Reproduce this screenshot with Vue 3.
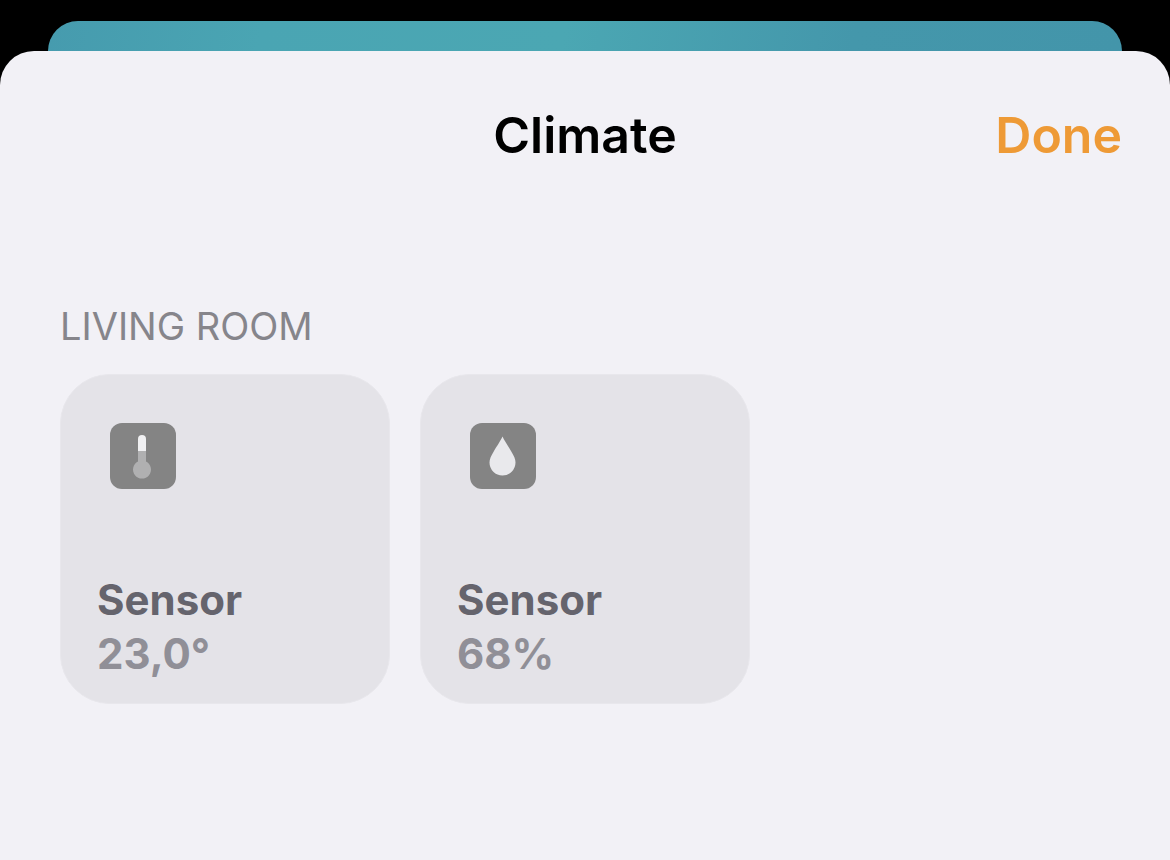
<script setup>
const room = {
  name: 'LIVING ROOM',
  sensors: [
    { id: 'temperature', name: 'Sensor', value: '23,0°' },
    { id: 'humidity', name: 'Sensor', value: '68%' },
  ],
}
</script>

<template>
  <div class="screen">
    <div class="backdrop"></div>
    <main class="sheet">
      <header class="bar">
        <h1 class="title">Climate</h1>
        <button class="done" type="button">Done</button>
      </header>
      <section class="room" aria-labelledby="room-name">
        <h2 id="room-name" class="room-name">{{ room.name }}</h2>
        <div class="tiles">
          <button v-for="sensor in room.sensors" :key="sensor.id" class="tile" type="button">
            <svg class="icon" viewBox="0 0 66 66" aria-hidden="true">
              <rect width="66" height="66" rx="12" fill="#848484" />
              <template v-if="sensor.id === 'temperature'">
                <path d="M28 28V16a4 4 0 0 1 8 0V28Z" fill="#f0f0f2" />
                <path d="M28 28H36V38.500a9 9 0 1 1-8 0Z" fill="#b0b0b1" />
              </template>
              <path
                v-else
                d="M32.500 13.500C34 17 38 23 41 28C44 33 45.500 36 45.500 39.500A13 13 0 0 1 19.500 39.500C19.500 36 21 33 24 28C27 23 31 17 32.500 13.500Z"
                fill="#e9e9ec"
              />
            </svg>
            <span class="reading">
              <span class="name">{{ sensor.name }}</span>
              <span class="value">{{ sensor.value }}</span>
            </span>
          </button>
        </div>
      </section>
    </main>
  </div>
</template>

<style>
body {
  margin: 0;
  background: #000;
}
</style>

<style scoped>
.screen {
  display: flex;
  flex-direction: column;
  box-sizing: border-box;
  min-height: 100vh;
  padding-top: 21px;
  background: #000;
  font-family: Inter, "Liberation Sans", sans-serif;
}

.backdrop {
  height: 30px;
  margin: 0 48px;
  border-radius: 30px 30px 0 0;
  background: linear-gradient(100deg, #469bae 0%, #4aa5b3 20%, #4ba7b3 48%, #4497ab 75%, #4395aa 100%);
}

.sheet {
  flex: 1;
  border-radius: 34px 34px 0 0;
  background: #f2f1f6;
}

.bar {
  display: grid;
  grid-template-columns: 1fr auto 1fr;
  align-items: center;
  padding: 54px 48px 0;
}

.title {
  grid-column: 2;
  margin: 0;
  font-size: 50px;
  font-weight: 600;
  line-height: 60px;
  color: #000;
}

.done {
  justify-self: end;
  padding: 0;
  border: 0;
  background: none;
  font: inherit;
  font-size: 50px;
  font-weight: 600;
  line-height: 60px;
  color: #ee9a36;
  cursor: pointer;
}

.room {
  padding: 137px 60px 60px;
}

.room-name {
  margin: 0 0 24px;
  font-size: 38px;
  font-weight: 400;
  line-height: 48px;
  color: #86858b;
}

.tiles {
  display: grid;
  grid-template-columns: repeat(3, 1fr);
  gap: 30px;
}

.tile {
  display: flex;
  flex-direction: column;
  justify-content: space-between;
  align-items: flex-start;
  box-sizing: border-box;
  aspect-ratio: 1;
  padding: 48px 36px 22px;
  border: 1px solid #e8e7ec;
  border-radius: 50px;
  background: #e4e3e8;
  font: inherit;
  text-align: left;
  cursor: pointer;
}

.icon {
  width: 66px;
  height: 66px;
  margin-left: 13px;
}

.reading {
  display: flex;
  flex-direction: column;
  font-size: 42px;
  font-weight: 700;
  line-height: 54px;
}

.name {
  color: #65646d;
}

.value {
  color: #908f97;
}
</style>
